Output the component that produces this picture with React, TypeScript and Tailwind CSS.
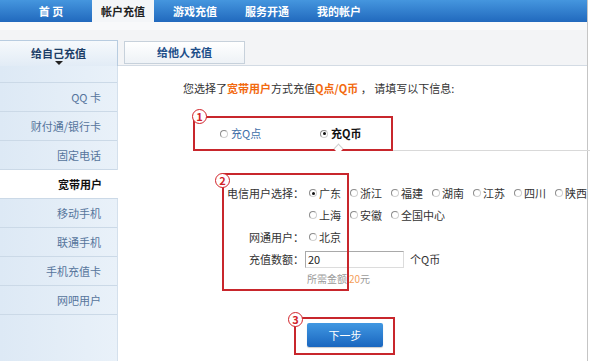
import React from 'react';

const navItems = ['首 页', '帐户充值', '游戏充值', '服务开通', '我的帐户'];
const sideItems = ['QQ 卡', '财付通/银行卡', '固定电话', '宽带用户', '移动手机', '联通手机', '手机充值卡', '网吧用户'];
const telecomRow1 = ['广东', '浙江', '福建', '湖南', '江苏', '四川', '陕西'];
const telecomRow2 = ['上海', '安徽', '全国中心'];

function Radio({ checked }: { checked?: boolean }) {
  return (
    <span className="relative inline-block w-[8px] h-[8px] rounded-full border border-[#8c8c8c] border-r-[#d0d0d0] border-b-[#d0d0d0] bg-white shrink-0">
      {checked && <span className="absolute left-[1.5px] top-[1.5px] w-[3px] h-[3px] rounded-full bg-[#111]" />}
    </span>
  );
}

function Mark({ n, className }: { n: string; className: string }) {
  return (
    <span
      className={`absolute w-[15px] h-[15px] rounded-full border-[1.5px] border-[#d2232a] bg-white text-[#d2232a] text-[11px] font-bold leading-none flex items-center justify-center ${className}`}
    >
      {n}
    </span>
  );
}

function Option({ label, checked, wide }: { label: string; checked?: boolean; wide?: boolean }) {
  return (
    <span className={`inline-flex items-center gap-[2px] whitespace-nowrap shrink-0 ${wide ? 'w-[60px]' : 'w-[41px]'}`}>
      <Radio checked={checked} />
      <span>{label}</span>
    </span>
  );
}

export default function App() {
  return (
    <div className="w-[590px] h-[361px] overflow-hidden bg-white text-[11px] text-[#333] font-['Noto_Sans_CJK_SC','Noto_Sans',sans-serif]">
      <div className="w-[588px] h-full border-r border-[#c5c5c5] flex flex-col">
        {/* top nav */}
        <div className="h-[22px] flex pl-[15px] bg-gradient-to-b from-[#4596de] to-[#2169bd] shrink-0">
          {navItems.map((item, i) => (
            <div key={item} className="w-[72px] flex justify-center">
              <div
                className={`h-full flex items-center justify-center font-bold whitespace-pre ${
                  i === 1 ? 'w-[62px] bg-[#f4f6f8] text-[#222]' : 'text-white'
                }`}
              >
                {item}
              </div>
            </div>
          ))}
        </div>

        {/* sub tabs */}
        <div className="h-[44px] shrink-0 bg-[#f3f4f6] border-t-[8px] border-[#f8f9fa] border-b border-b-[#d3dbe4] flex items-end">
          <div className="w-[118px] h-[26px] -mb-px bg-gradient-to-b from-[#f6f9fc] to-[#e2ecf6] border-t border-r border-[#b8cce0] flex flex-col items-center justify-center">
            <span className="font-bold text-[#1c3d66] leading-[14px] mt-[3px]">给自己充值</span>
            <span className="mt-[1px] w-0 h-0 border-l-[4px] border-r-[4px] border-t-[4px] border-l-transparent border-r-transparent border-t-[#222]" />
          </div>
          <div className="ml-[6px] mb-[1px] w-[121px] h-[23px] bg-gradient-to-b from-white to-[#eef2f6] border border-[#c7d1db] flex items-center justify-center font-bold text-[#1d4e89]">
            给他人充值
          </div>
        </div>

        <div className="flex flex-1">
          {/* sidebar */}
          <aside className="w-[118px] shrink-0 bg-gradient-to-r from-[#dde9f5] to-[#e9f1f9] border-r border-[#d4e0ec] pt-[16px]">
            <div className="border-t border-[#cbd9e7]">
              {sideItems.map((item) => (
                <div
                  key={item}
                  className={`h-[29px] border-b border-[#cbd9e7] flex items-center justify-end pr-[16px] ${
                    item === '宽带用户' ? 'bg-white text-[#111] font-bold -mr-px' : 'text-[#56759c]'
                  }`}
                >
                  {item}
                </div>
              ))}
            </div>
          </aside>

          {/* main */}
          <main className="flex-1 flex flex-col">
            <p className="pt-[14px] pl-[65px] leading-[16px] whitespace-nowrap">
              您选择了<b className="text-[#f26a10]">宽带用户</b>方式充值<b className="text-[#f26a10]">Q点/Q币</b> ， 请填写以下信息:
            </p>

            <div className="flex mt-[20px]">
              <div className="relative ml-[75px] w-[200px] h-[35px] border-2 border-[#c8262c] flex items-center pl-[25px]">
                <Mark n="1" className="-left-[3px] -top-[9px]" />
                <span className="w-[100px] inline-flex items-center gap-[3px] text-[#3d6ea8]">
                  <Radio />
                  充Q点
                </span>
                <span className="inline-flex items-center gap-[3px] font-bold text-[#111]">
                  <Radio checked />
                  充Q币
                </span>
                <span className="absolute left-[140px] bottom-[-3px] w-[7px] h-[7px] rotate-45 border-l border-t border-[#cfcfcf] bg-white" />
              </div>
              <div className="flex-1 border-b border-[#d9d9d9]" />
            </div>

            {/* form */}
            <div className="relative ml-[104px] mt-[31px]">
              <div className="absolute left-0 -top-[9px] w-[127px] h-[118px] border-2 border-[#c8262c] pointer-events-none">
                <Mark n="2" className="-left-[9px] -top-[2px]" />
              </div>
              <div className="h-[22px] flex items-center">
                <span className="w-[84px] text-right pr-[2px] shrink-0">电信用户选择：</span>
                <div className="flex pl-[3px]">
                  {telecomRow1.map((p, i) => (
                    <Option key={p} label={p} checked={i === 0} />
                  ))}
                </div>
              </div>
              <div className="h-[22px] flex items-center">
                <span className="w-[84px] shrink-0" />
                <div className="flex pl-[3px]">
                  {telecomRow2.map((p) => (
                    <Option key={p} label={p} wide={p === '全国中心'} />
                  ))}
                </div>
              </div>
              <div className="h-[22px] flex items-center">
                <span className="w-[84px] text-right pr-[2px] shrink-0">网通用户：</span>
                <div className="flex pl-[3px]">
                  <Option label="北京" />
                </div>
              </div>
              <div className="h-[22px] flex items-center">
                <span className="w-[84px] text-right pr-[2px] shrink-0">充值数额：</span>
                <input
                  readOnly
                  value="20"
                  className="ml-[-1px] w-[99px] h-[17px] border border-[#a9a9a9] border-b-[#dcdcdc] border-r-[#dcdcdc] px-[2px] text-[11px] text-[#222] outline-none"
                />
                <span className="ml-[6px]">个Q币</span>
              </div>
              <div className="h-[16px] flex items-center pl-[85px] text-[10px] text-[#9a9a9a]">
                所需金额 <span className="text-[#f4a05a] ml-[2px]">20</span>元
              </div>
            </div>

            <div className="relative ml-[176px] mt-[31px] w-[101px] h-[38px] border-2 border-[#c8262c] pl-[11px] pt-[4px]">
              <Mark n="3" className="-left-[8px] -top-[7px]" />
              <button className="w-[76px] h-[24px] rounded-[2px] bg-gradient-to-b from-[#4198e2] to-[#1a66bf] text-white text-[11px] shadow-[0_1px_1px_rgba(0,0,0,0.2)]">
                下一步
              </button>
            </div>
          </main>
        </div>
      </div>
    </div>
  );
}
